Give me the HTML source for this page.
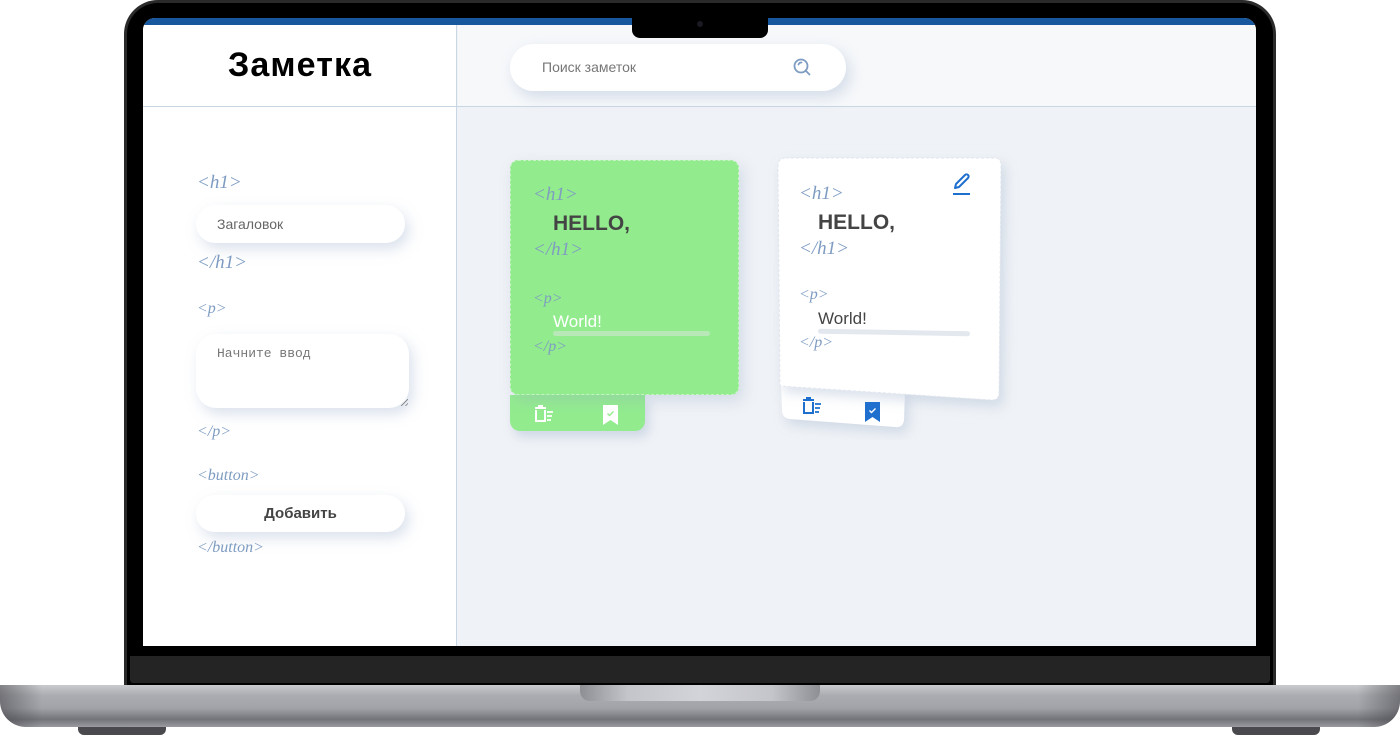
<!DOCTYPE html>
<html><head><meta charset="utf-8"><style>
*{margin:0;padding:0;box-sizing:border-box}
body{width:1400px;height:735px;background:#fff;position:relative;overflow:hidden;font-family:"Liberation Sans","DejaVu Sans",sans-serif}
.abs{position:absolute}
.tag{position:absolute;font-family:"Liberation Serif",serif;font-style:italic;color:#7e9cc2;font-size:19px;letter-spacing:0px}
.pill{position:absolute;background:#fff;border-radius:20px;box-shadow:4px 6px 14px rgba(150,170,200,.35)}
</style></head><body>
<div class="abs" style="left:124px;top:0;width:1152px;height:686px;background:#2a2a2a;border-radius:34px 34px 0 0"></div>
<div class="abs" style="left:127px;top:3px;width:1146px;height:683px;background:#000;border-radius:31px 31px 0 0"></div>
<div class="abs" style="left:130px;top:656px;width:1140px;height:27px;background:#242424;border-radius:0 0 3px 3px"></div>
<div class="abs" style="left:143px;top:18px;width:1113px;height:628px;background:#eff2f6;border-radius:12px 12px 0 0;overflow:hidden">
  <div class="abs" style="left:0;top:0;width:1113px;height:7px;background:#17579d"></div>
  <div class="abs" style="left:0;top:7px;width:314px;height:621px;background:#fff;border-right:1px solid #c9d6e3"></div>
  <div class="abs" style="left:315px;top:7px;width:798px;height:81px;background:#f6f8fa"></div>
  <div class="abs" style="left:0;top:88px;width:1113px;height:1px;background:#c9d6e3"></div>
</div>
<div class="abs" style="left:632px;top:16px;width:136px;height:22px;background:#000;border-radius:0 0 8px 8px"></div>
<div class="abs" style="left:697px;top:21px;width:6px;height:6px;background:#1a1a22;border-radius:50%"></div>
<div class="abs" style="left:228px;top:46px;font-size:34px;font-weight:bold;color:#000;letter-spacing:1.1px">Заметка</div>
<div class="pill" style="left:510px;top:44px;width:336px;height:47px;border-radius:24px"></div>
<div class="abs" style="left:542px;top:59px;font-size:14px;color:#777">Поиск заметок</div>
<svg class="abs" style="left:792px;top:57px" width="20" height="20" viewBox="0 0 20 20"><circle cx="9" cy="9" r="6.5" fill="none" stroke="#7e9cc2" stroke-width="1.8"/><path d="M13.5 13.5l4 4M6.5 7.5a3 3 0 0 1 3-2" stroke="#7e9cc2" stroke-width="1.8" fill="none" stroke-linecap="round"/></svg>
<div class="tag" style="left:197px;top:172px">&lt;h1&gt;</div>
<div class="pill" style="left:196px;top:205px;width:209px;height:38px"></div>
<div class="abs" style="left:217px;top:216px;font-size:14px;color:#666">Загаловок</div>
<div class="tag" style="left:197px;top:252px">&lt;/h1&gt;</div>
<div class="tag" style="left:197px;top:300px;font-size:16px">&lt;p&gt;</div>
<div class="pill" style="left:196px;top:334px;width:213px;height:74px"></div>
<div class="abs" style="left:217px;top:346px;font-size:13px;color:#777;font-family:'Liberation Mono',monospace">Начните ввод</div>
<div class="abs" style="left:401px;top:399px;width:7px;height:7px;background:linear-gradient(135deg,transparent 45%,#666 50%,transparent 58%,transparent 75%,#666 80%,transparent 88%)"></div>
<div class="tag" style="left:197px;top:423px;font-size:16px">&lt;/p&gt;</div>
<div class="tag" style="left:197px;top:467px;font-size:16px">&lt;button&gt;</div>
<div class="pill" style="left:196px;top:495px;width:209px;height:37px"></div>
<div class="abs" style="left:196px;top:505px;width:209px;text-align:center;font-size:15px;font-weight:bold;color:#444">Добавить</div>
<div class="tag" style="left:197px;top:539px;font-size:16px">&lt;/button&gt;</div>
<div class="abs" style="left:510px;top:395px;width:135px;height:36px;background:#92ec8e;border-radius:0 0 10px 10px;box-shadow:4px 6px 10px rgba(150,170,200,.35)"></div>
<div class="abs" style="left:510px;top:160px;width:229px;height:235px;background:#92ec8e;border-radius:8px;border:1px dashed #c6f3c4;box-shadow:4px 6px 14px rgba(150,170,200,.3)"></div>
<div class="tag" style="left:533px;top:184px;color:#7f9cc0">&lt;h1&gt;</div>
<div class="abs" style="left:553px;top:212px;font-size:21px;font-weight:bold;color:#444">HELLO,</div>
<div class="tag" style="left:533px;top:239px;color:#7f9cc0">&lt;/h1&gt;</div>
<div class="tag" style="left:533px;top:290px;font-size:16px">&lt;p&gt;</div>
<div class="abs" style="left:553px;top:312px;font-size:17px;color:#fff">World!</div>
<div class="abs" style="left:553px;top:331px;width:157px;height:5px;background:#b8e8b8;border-radius:3px"></div>
<div class="tag" style="left:533px;top:338px;font-size:16px">&lt;/p&gt;</div>
<svg class="abs" style="left:533px;top:405px" width="22" height="18" viewBox="0 0 22 18"><path d="M2 3h11M5 1h5M3 5v11h9V5" stroke="#fff" stroke-width="2" fill="none"/><path d="M14 7h6M14 11h5M14 15h4" stroke="#fff" stroke-width="1.8"/></svg>
<svg class="abs" style="left:603px;top:405px" width="15" height="20" viewBox="0 0 15 20"><path d="M0 0h15v20l-7.5-5L0 20z" fill="#fff"/><path d="M4.5 8.5l2 2 4-4" stroke="#92ec8e" stroke-width="1.4" fill="none"/></svg>
<svg class="abs" style="left:760px;top:140px" width="280" height="330" viewBox="760 140 280 330">
  <defs><filter id="sh" x="-20%" y="-20%" width="150%" height="150%"><feDropShadow dx="4" dy="6" stdDeviation="6" flood-color="#96aac8" flood-opacity="0.35"/></filter></defs>
  <path d="M781 385 L905 392 L904 420 Q903 428 895 427 L790 419 Q782 418 782 410 Z" fill="#fff" filter="url(#sh)"/>
  <path d="M786 158 L994 158 Q1001 158 1001 165 L999 393 Q999 400 992 400 L780 386 L778 166 Q778 158 786 158 Z" fill="#fff" stroke="#e2e7ee" stroke-dasharray="3 2" filter="url(#sh)"/>
</svg>
<div class="tag" style="left:799px;top:183px">&lt;h1&gt;</div>
<div class="abs" style="left:818px;top:211px;font-size:21px;font-weight:bold;color:#444">HELLO,</div>
<div class="tag" style="left:799px;top:238px">&lt;/h1&gt;</div>
<div class="tag" style="left:799px;top:286px;font-size:16px">&lt;p&gt;</div>
<div class="abs" style="left:818px;top:309px;font-size:17px;color:#444">World!</div>
<div class="abs" style="left:818px;top:330px;width:152px;height:5px;background:#e3e8ef;border-radius:3px;transform:rotate(1deg)"></div>
<div class="tag" style="left:799px;top:334px;font-size:16px">&lt;/p&gt;</div>
<svg class="abs" style="left:951px;top:172px" width="22" height="24" viewBox="0 0 22 24"><path d="M4 16l1-4 9-9a2 2 0 0 1 3 3l-9 9z" stroke="#1f6fcf" stroke-width="2" fill="none" stroke-linejoin="round"/><path d="M2 22h17" stroke="#1f6fcf" stroke-width="2"/></svg>
<svg class="abs" style="left:801px;top:397px" width="22" height="18" viewBox="0 0 22 18"><path d="M2 3h11M5 1h5M3 5v11h9V5" stroke="#1f6fcf" stroke-width="2" fill="none"/><path d="M14 7h6M14 11h5M14 15h4" stroke="#1f6fcf" stroke-width="1.8"/></svg>
<svg class="abs" style="left:865px;top:402px" width="15" height="20" viewBox="0 0 15 20"><path d="M0 0h15v20l-7.5-5L0 20z" fill="#1f6fcf"/><path d="M4.5 8.5l2 2 4-4" stroke="#fff" stroke-width="1.4" fill="none"/></svg>
<div class="abs" style="left:0;top:685px;width:1400px;height:42px;border-radius:0 0 26px 26px;background:linear-gradient(#c9cacd 0%,#abacb1 25%,#a2a3a8 55%,#737479 82%,#9a9ba0 100%)"></div>
<div class="abs" style="left:0;top:685px;width:1400px;height:42px;border-radius:0 0 26px 26px;background:linear-gradient(90deg,rgba(60,60,65,.5),transparent 3%,transparent 97%,rgba(60,60,65,.5))"></div>
<div class="abs" style="left:580px;top:685px;width:240px;height:16px;border-radius:0 0 10px 10px;background:linear-gradient(90deg,#8e8f94,#c4c5ca 20%,#d3d4d9 50%,#c4c5ca 80%,#8e8f94)"></div>
<div class="abs" style="left:78px;top:727px;width:88px;height:8px;background:#4a4a4e;border-radius:0 0 6px 6px"></div>
<div class="abs" style="left:1232px;top:727px;width:88px;height:8px;background:#4a4a4e;border-radius:0 0 6px 6px"></div>
</body></html>
